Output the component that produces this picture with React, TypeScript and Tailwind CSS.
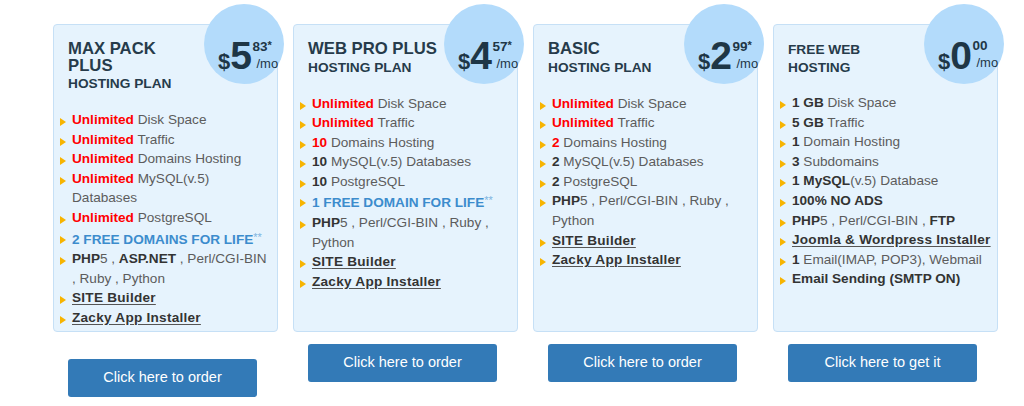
import React from "react";

const Red = ({ children }: { children: React.ReactNode }) => (
  <span className="font-bold text-[#ff0000]">{children}</span>
);
const B = ({ children }: { children: React.ReactNode }) => (
  <span className="font-bold text-[#333333]">{children}</span>
);
const L = ({ children }: { children: React.ReactNode }) => (
  <span className="font-bold text-[#333333] underline decoration-[#555555] underline-offset-[2px] tracking-[0.25px]">
    {children}
  </span>
);
const Blue = ({ children }: { children: React.ReactNode }) => (
  <span className="font-bold text-[#3c8ccd]">
    {children}
    <span className="font-normal text-[#7fb3df] text-[11px] align-[3px]">**</span>
  </span>
);

type Plan = {
  title: string;
  sub?: string;
  small?: boolean;
  dollars: string;
  cents: string;
  star: boolean;
  features: React.ReactNode[];
  button: string;
  btnTop: string;
};

const plans: Plan[] = [
  {
    title: "MAX PACK PLUS",
    sub: "HOSTING PLAN",
    dollars: "5",
    cents: "83",
    star: true,
    button: "Click here to order",
    btnTop: "mt-[27px]",
    features: [
      <><Red>Unlimited</Red> Disk Space</>,
      <><Red>Unlimited</Red> Traffic</>,
      <><Red>Unlimited</Red> Domains Hosting</>,
      <><Red>Unlimited</Red> MySQL(v.5) Databases</>,
      <><Red>Unlimited</Red> PostgreSQL</>,
      <Blue>2 FREE DOMAINS FOR LIFE</Blue>,
      <><B>PHP</B>5 , <B>ASP.NET</B> , Perl/CGI-BIN , Ruby , Python</>,
      <L>SITE Builder</L>,
      <L>Zacky App Installer</L>,
    ],
  },
  {
    title: "WEB PRO PLUS",
    sub: "HOSTING PLAN",
    dollars: "4",
    cents: "57",
    star: true,
    button: "Click here to order",
    btnTop: "mt-[12px]",
    features: [
      <><Red>Unlimited</Red> Disk Space</>,
      <><Red>Unlimited</Red> Traffic</>,
      <><Red>10</Red> Domains Hosting</>,
      <><B>10</B> MySQL(v.5) Databases</>,
      <><B>10</B> PostgreSQL</>,
      <Blue>1 FREE DOMAIN FOR LIFE</Blue>,
      <><B>PHP</B>5 , Perl/CGI-BIN , Ruby , Python</>,
      <L>SITE Builder</L>,
      <L>Zacky App Installer</L>,
    ],
  },
  {
    title: "BASIC",
    sub: "HOSTING PLAN",
    dollars: "2",
    cents: "99",
    star: true,
    button: "Click here to order",
    btnTop: "mt-[12px]",
    features: [
      <><Red>Unlimited</Red> Disk Space</>,
      <><Red>Unlimited</Red> Traffic</>,
      <><Red>2</Red> Domains Hosting</>,
      <><B>2</B> MySQL(v.5) Databases</>,
      <><B>2</B> PostgreSQL</>,
      <><B>PHP</B>5 , Perl/CGI-BIN , Ruby , Python</>,
      <L>SITE Builder</L>,
      <L>Zacky App Installer</L>,
    ],
  },
  {
    title: "FREE WEB HOSTING",
    small: true,
    dollars: "0",
    cents: "00",
    star: false,
    button: "Click here to get it",
    btnTop: "mt-[12px]",
    features: [
      <><B>1 GB</B> Disk Space</>,
      <><B>5 GB</B> Traffic</>,
      <><B>1</B> Domain Hosting</>,
      <><B>3</B> Subdomains</>,
      <><B>1 MySQL</B>(v.5) Database</>,
      <B>100% NO ADS</B>,
      <><B>PHP</B>5 , Perl/CGI-BIN , <B>FTP</B></>,
      <L>Joomla &amp; Wordpress Installer</L>,
      <><B>1</B> Email(IMAP, POP3), Webmail</>,
      <B>Email Sending (SMTP ON)</B>,
    ],
  },
];

function Price({ p }: { p: Plan }) {
  return (
    <div className="absolute top-[-21px] right-[-7px] w-[80px] h-[80px] rounded-full bg-[#b3dbfb] flex items-start pl-[14px] pt-[32px] text-[#1e3646]">
      <div className="flex items-baseline leading-[40px] font-bold">
        <span className="text-[22px]">$</span>
        <span className="text-[39px] tracking-[-0.5px]">{p.dollars}</span>
      </div>
      <div className="flex flex-col ml-[1px] mt-[3px]">
        <span className="text-[13.5px] leading-[13px] font-bold">
          {p.cents}
          {p.star && <span className="text-[11px] align-[2px]">*</span>}
        </span>
        <span className="text-[13px] leading-[14px] mt-[4px] ml-[4px]">/mo</span>
      </div>
    </div>
  );
}

function Card({ p }: { p: Plan }) {
  return (
    <div className="relative bg-[#e6f3fd] border border-[#c6e0f6] rounded-[4px] pt-[16px] pb-[3px]">
      <Price p={p} />
      <div className="pl-[14px] text-[#263b4b] font-bold">
        {p.small ? (
          <div className="w-[135px] text-[13.7px] leading-[18px]">{p.title}</div>
        ) : (
          <>
            <div className="w-[135px] text-[16.7px] leading-[16.5px]">{p.title}</div>
            <div className="mt-[2px] text-[13.7px] leading-[16px]">{p.sub}</div>
          </>
        )}
      </div>
      <ul className={`${p.small ? "mt-[16px]" : "mt-[18px]"} pl-[6px] pr-[3px] text-[13.6px] leading-[19.6px] text-[#5c5c5c]`}>
        {p.features.map((f, i) => (
          <li key={i} className="flex items-start">
            <span className="mt-[8px] w-0 h-0 shrink-0 border-y-[4px] border-y-transparent border-l-[6px] border-l-[#f7b400]" />
            <span className="ml-[6px]">{f}</span>
          </li>
        ))}
      </ul>
    </div>
  );
}

export default function App() {
  return (
    <div className="w-[1024px] h-[406px] bg-white overflow-hidden font-['Liberation_Sans',Arial,sans-serif] pl-[53px] pt-[24px]">
      <div className="grid grid-cols-[repeat(4,225px)] gap-x-[15px]">
        {plans.map((p, i) => (
          <Card key={i} p={p} />
        ))}
        {plans.map((p, i) => (
          <div key={"b" + i} className={`${p.btnTop} pl-[15px]`}>
            <button className="w-[189px] h-[38px] rounded-[3px] bg-[#337ab7] text-white text-[14.5px] flex items-center justify-center">
              {p.button}
            </button>
          </div>
        ))}
      </div>
    </div>
  );
}
